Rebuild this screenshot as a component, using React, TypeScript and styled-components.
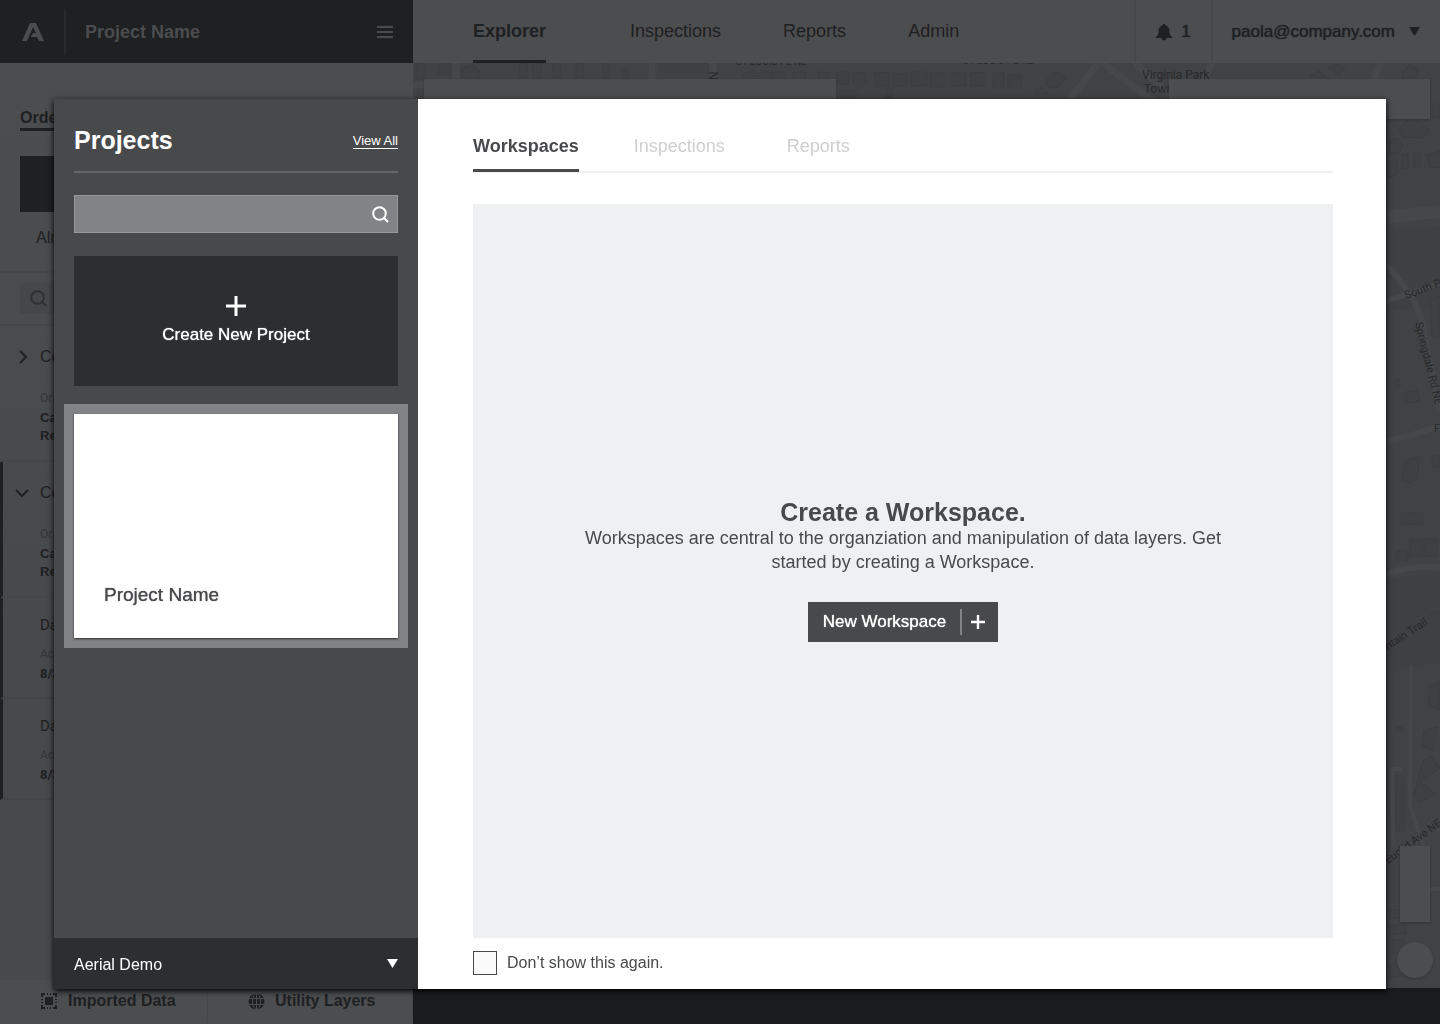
import React from "react";
import styled, { createGlobalStyle } from "styled-components";

const ink = "#1f2022";
const sheet = "#4c4d4f";
const rule = "#464749";
const slate = "#48494b";
const coal = "#2d2e30";
const medium = "0 0 1px currentColor";

const GlobalStyle = createGlobalStyle`
  * { box-sizing: border-box; }
  body {
    margin: 0;
    background: ${sheet};
    font-family: "Liberation Sans", Arial, sans-serif;
    font-size: 16px;
    color: ${ink};
  }
  button, input, select { font: inherit; color: inherit; }
  button { border: 0; padding: 0; background: none; cursor: pointer; }
  h1, h2, p { margin: 0; }
  a { color: inherit; text-decoration: none; }
  svg { display: block; flex: none; }
`;

const Shell = styled.div`
  display: grid;
  grid-template-columns: 413px 1fr;
  height: 100vh;
  overflow: hidden;
`;

const Column = styled.div`
  display: flex;
  flex-direction: column;
  min-width: 0;
  min-height: 0;
`;

/* ---------- left column ---------- */

const Brand = styled.header`
  display: flex;
  align-items: center;
  height: 63px;
  flex: none;
  padding: 0 20px 0 22px;
  background: ${ink};
  color: #4b4c4e;
`;

const BrandName = styled.div`
  flex: 1;
  display: flex;
  align-items: center;
  height: 46px;
  margin-left: 20px;
  padding: 2px 0 0 19px;
  border-left: 2px solid #292a2c;
  font-size: 18px;
  font-weight: 700;
`;

const SideBody = styled.div`
  flex: 1;
  display: flex;
  flex-direction: column;
  min-height: 0;
  background: linear-gradient(${sheet}, ${slate} 60%);
`;

const SideTabs = styled.nav`
  display: flex;
  padding: 42px 20px 0;
`;

const SideTab = styled.a`
  height: 26px;
  line-height: 26px;
  border-bottom: 3px solid ${ink};
  font-weight: 700;
`;

const Tile = styled.button`
  display: flex;
  flex-direction: column;
  align-items: flex-start;
  gap: 16px;
  margin: 25px 20px 0;
  padding-bottom: 23px;
  line-height: 20px;
  &::before {
    content: "";
    width: 66px;
    height: 56px;
    background: ${ink};
  }
`;

const TileText = styled.span`
  padding-left: 16px;
`;

const Filter = styled.label`
  display: block;
  padding: 10px 20px;
  border: solid ${rule};
  border-width: 2px 0;
`;

const FilterBox = styled.span`
  display: flex;
  align-items: center;
  height: 31px;
  padding-left: 10px;
  background: #464749;
  color: #2f3032;
`;

const BareInput = styled.input`
  flex: 1;
  min-width: 0;
  border: 0;
  background: none;
  outline: none;
`;

const Order = styled.section<{ $open?: boolean }>`
  padding: 20px 0 0 ${(p) => (p.$open ? 12 : 15)}px;
  height: 136px;
  border-bottom: 2px solid ${rule};
  border-left: ${(p) => (p.$open ? `3px solid ${ink}` : "0")};
`;

const OrderHead = styled.button`
  display: flex;
  align-items: center;
  gap: 9px;
  line-height: 22px;
`;

const Detail = styled.div<{ $inset?: boolean }>`
  padding: ${(p) => (p.$inset ? "8px 0 0" : "19px 0 0 25px")};
  font-size: 13px;
  font-weight: 700;
  line-height: 18px;
`;

const Caption = styled.div`
  font-family: Roboto, sans-serif;
  font-size: 12px;
  font-weight: 400;
  line-height: 22px;
  color: #343537;
`;

const Entry = styled.section`
  height: 101px;
  padding: 17px 0 0 37px;
  border-left: 3px solid ${ink};
  border-bottom: 2px solid #434446;
  font-family: Roboto, sans-serif;
  font-size: 15px;
  line-height: 20px;
`;

const SideFooter = styled.footer`
  display: grid;
  grid-template-columns: 208px 1fr;
  flex: none;
  height: 44px;
  background: ${sheet};
`;

const FooterLink = styled.button`
  display: flex;
  align-items: center;
  gap: 10px;
  height: 42px;
  padding-left: 40px;
  border-right: 1px solid ${rule};
  color: ${ink};
  font-weight: 700;
`;

/* ---------- top bar and map ---------- */

const TopBar = styled.header`
  display: flex;
  flex: none;
  height: 63px;
  padding-left: 60px;
  background: ${sheet};
`;

const TopNav = styled.nav`
  flex: 1;
  display: flex;
  gap: 62px;
  font-size: 18px;
  line-height: 62px;
`;

const TopLink = styled.a<{ $active?: boolean }>`
  height: 63px;
  border-bottom: 3px solid ${(p) => (p.$active ? ink : "transparent")};
  font-weight: ${(p) => (p.$active ? 700 : 400)};
  margin-right: ${(p) => (p.$active ? 22 : 0)}px;
`;

const Bell = styled.button`
  display: flex;
  align-items: center;
  justify-content: center;
  gap: 8px;
  width: 79px;
  border: solid ${rule};
  border-width: 0 2px;
  font-size: 17px;
  text-shadow: ${medium};
`;

const User = styled.button`
  display: flex;
  align-items: center;
  gap: 14px;
  padding: 0 20px 0 19px;
  font-size: 17px;
  text-shadow: ${medium};
`;

const Map = styled.main`
  position: relative;
  flex: 1;
  min-height: 0;
  overflow: hidden;
  background: #414244;
`;

const MapArt = styled.svg`
  position: absolute;
  top: 0;
  right: 0;
  width: 1027px;
  height: 925px;
`;

const MapTools = styled.div`
  position: absolute;
  inset: 16px 10px 10px 11px;
  display: flex;
  justify-content: space-between;
  align-items: flex-start;
`;

const Panel = styled.div<{ $w: number; $h: number }>`
  width: ${(p) => p.$w}px;
  height: ${(p) => p.$h}px;
  background: ${sheet};
  box-shadow: 0 1px 2px #333436;
`;

const Zoom = styled.div`
  position: absolute;
  right: 7px;
  bottom: 10px;
  display: flex;
  flex-direction: column;
  align-items: center;
  gap: 20px;
`;

const Round = styled.div`
  width: 36px;
  height: 36px;
  border-radius: 50%;
  background: ${sheet};
  box-shadow: 0 1px 2px #333436;
`;

const Strip = styled.div`
  flex: none;
  height: 36px;
  background: #1a1b1d;
`;

/* ---------- dialog ---------- */

const Overlay = styled.div`
  position: fixed;
  inset: 0;
  display: flex;
  padding: 99px 54px 35px;
`;

const Dialog = styled.div`
  flex: 1;
  display: flex;
  min-width: 0;
  background: #fff;
  color: ${slate};
  box-shadow: 0 2px 6px #000;
`;

const Projects = styled.aside`
  display: flex;
  flex-direction: column;
  flex: none;
  width: 364px;
  background: ${slate};
  color: #fff;
`;

const ProjectsBody = styled.div`
  flex: 1;
  display: flex;
  flex-direction: column;
  padding: 0 20px;
`;

const ProjectsHead = styled.div`
  display: flex;
  align-items: center;
  justify-content: space-between;
  height: 74px;
  padding-top: 10px;
  border-bottom: 2px solid #646567;
`;

const Title = styled.h1`
  font-size: 25px;
  line-height: 32px;
`;

const ViewAll = styled.a`
  margin-top: 3px;
  border-bottom: 1px solid #fff;
  font-size: 13px;
  line-height: 14px;
`;

const Search = styled.label`
  display: flex;
  align-items: center;
  height: 38px;
  margin-top: 22px;
  padding-right: 8px;
  border: 1px solid #96979a;
  background: #828386;
`;

const NewProject = styled.button`
  display: flex;
  flex-direction: column;
  align-items: center;
  justify-content: center;
  gap: 8px;
  height: 130px;
  margin-top: 23px;
  background: ${coal};
  font-size: 17px;
  line-height: 22px;
  text-shadow: ${medium};
`;

const Card = styled.button`
  display: flex;
  align-items: flex-end;
  height: 224px;
  margin-top: 28px;
  padding: 0 30px 32px;
  background: #fff;
  box-shadow: 0 1px 2px ${coal}, 0 0 0 10px #828386;
  color: ${slate};
  font-size: 19px;
  line-height: 22px;
  text-shadow: ${medium};
`;

const Account = styled.div`
  position: relative;
  display: flex;
  align-items: center;
  height: 51px;
  background: ${coal};
  svg {
    position: absolute;
    right: 20px;
    pointer-events: none;
  }
`;

const AccountSelect = styled.select`
  appearance: none;
  width: 100%;
  height: 100%;
  padding: 2px 20px 0;
  border: 0;
  background: none;
  outline: none;
`;

const Content = styled.section`
  flex: 1;
  display: flex;
  flex-direction: column;
  min-width: 0;
  padding: 0 53px 0 55px;
`;

const Tabs = styled.nav`
  display: flex;
  gap: 62px;
  height: 74px;
  padding-top: 34px;
  border-bottom: 2px solid #efeff0;
  font-size: 18px;
  line-height: 26px;
`;

const Tab = styled.a<{ $active?: boolean }>`
  height: 39px;
  border-bottom: 3px solid ${(p) => (p.$active ? slate : "transparent")};
  color: ${(p) => (p.$active ? slate : "#cfcfd1")};
  font-weight: ${(p) => (p.$active ? 700 : 400)};
  margin-right: ${(p) => (p.$active ? -7 : 0)}px;
`;

const Empty = styled.div`
  flex: 1;
  display: flex;
  flex-direction: column;
  align-items: center;
  justify-content: center;
  margin-top: 31px;
  padding: 0 100px 2px;
  background: #eff0f2;
  text-align: center;
`;

const EmptyTitle = styled.h2`
  font-size: 25px;
  line-height: 28px;
`;

const EmptyText = styled.p`
  max-width: 660px;
  font-size: 18px;
  line-height: 24px;
`;

const NewWorkspace = styled.button`
  display: flex;
  align-items: center;
  height: 40px;
  margin-top: 28px;
  padding: 0 13px 0 15px;
  background: ${slate};
  color: #fff;
  font-size: 17px;
  text-shadow: ${medium};
  svg {
    width: 25px;
    height: 26px;
    margin-left: 14px;
    padding-left: 9px;
    border-left: 2px solid #828386;
  }
`;

const Again = styled.label`
  display: flex;
  align-items: center;
  gap: 10px;
  height: 51px;
  padding-bottom: 2px;
`;

const Check = styled.input`
  appearance: none;
  width: 24px;
  height: 24px;
  margin: 0;
  border: 1px solid ${slate};
  background: #fafafa;
  &:checked { background: ${slate}; }
`;

/* ---------- drawings ---------- */

const Logo = () => (
  <svg width="22" height="18" viewBox="0 0 22 18" fill="currentColor">
    <path d="M8 0h6l8 18h-5l-2-4H9l2-4h3l-3-6-6 14H0z" />
  </svg>
);

const Bars = () => (
  <svg width="16" height="12" viewBox="0 0 16 12" fill="currentColor">
    <path d="M0 0h16v2H0zM0 5h16v2H0zM0 10h16v2H0z" />
  </svg>
);

const Lens = () => (
  <svg width="17" height="17" viewBox="0 0 17 17" fill="none" stroke="currentColor" strokeWidth="2">
    <circle cx="7.500" cy="7.500" r="6.300" />
    <path d="M11.800 11.800l4.200 4.200" />
  </svg>
);

const Chevron = ({ down }: { down?: boolean }) => (
  <svg width="16" height="16" viewBox="0 0 16 16" fill="none" stroke="currentColor" strokeWidth="2">
    <path d={down ? "M1 5l6 6 6-6" : "M5 2l6 6-6 6"} />
  </svg>
);

const Caret = () => (
  <svg width="11" height="9" viewBox="0 0 11 9" fill="currentColor">
    <path d="M0 0h11L5.500 9z" />
  </svg>
);

const BellIcon = () => (
  <svg width="18" height="18" viewBox="0 0 18 18" fill="currentColor">
    <path d="M9 1c.9 0 1.400.6 1.400 1.300 2.500.8 4 2.700 4 5.300 0 3.700.8 5 2.600 6.200.6.500.3 1.200-.4 1.200h-5.100a2.500 2.500 0 0 1-5 0H1.400c-.7 0-1-.7-.4-1.200 1.800-1.200 2.600-2.500 2.600-6.200 0-2.600 1.500-4.500 4-5.300C7.600 1.600 8.100 1 9 1z" />
  </svg>
);

const Plus = ({ size }: { size: number }) => (
  <svg width={size} height={size} viewBox={`0 0 ${size} ${size}`} stroke="currentColor" strokeWidth="3">
    <path d={`M0 ${size / 2}h${size}M${size / 2} 0v${size}`} />
  </svg>
);

const PlusSmall = () => (
  <svg viewBox="0 0 14 26" stroke="currentColor" strokeWidth="2.400">
    <path d="M0 13h14M7 6v14" />
  </svg>
);

const Imported = () => (
  <svg width="18" height="18" viewBox="0 0 18 18" fill="none" stroke="currentColor" strokeWidth="2">
    <path d="M2 5V2h3M13 2h3v3M16 13v3h-3M5 16H2v-3M7 2h1M10 2h1M7 16h1M10 16h1M2 7v1M2 10v1M16 7v1M16 10v1" />
    <rect x="5" y="5" width="8" height="8" rx="1" fill="currentColor" stroke="none" />
  </svg>
);

const Globe = () => (
  <svg width="17" height="17" viewBox="0 0 17 17" fill="none" stroke={sheet}>
    <circle cx="8.500" cy="8.500" r="8" fill="currentColor" stroke="none" />
    <ellipse cx="8.500" cy="8.500" rx="4" ry="8" />
    <path d="M8.500 0v17M0 5.500h17M0 11.500h17" />
  </svg>
);

const MapDrawing = () => (
  <MapArt viewBox="413 63 1027 925" aria-hidden="true">
    <path d="M1387 232l53-6v83l-53 1zM1386 580l54-8v90l-54 11z" fill="#3f4042" />
    <g fill="#3f4042" stroke="#3b3c3e" strokeWidth="1">
      <path d="M416 63h10v16h-10zM438 63h12v12h-12zM462 68l10-3 8 6-2 8h-16zM519 63h8v15h-8zM533 63h8v15h-8zM553 63h8v15h-8zM576 63h7v15h-7zM603 63h7v15h-7zM622 70h7v9h-7zM660 63h48v9h-48z" />
      <path d="M743 74l10-3 6 3 8-3 6 8h-30zM772 72h14v12h-14zM793 72h13v11h-13zM818 72h10v11h-10zM837 72h12v12h-12zM853 74l12-2 2 9-8 8-6-6zM874 73l14-1 1 14h-13zM893 74h13v12h-13zM911 72h16v14h-16zM930 73h14v14h-14zM951 73h15v13h-15zM970 73l14-1v14h-13zM993 73h11v15h-11zM1008 75h13v13h-13zM840 90h16v7h-16zM886 88h6v9h-6z" />
      <path d="M1045 81l10-9 11 5-7 10-9 1zM1035 91l5-5 9 8h-10zM1310 76l8-5 12 9zM1328 68l8-4 9 3-6 8zM1402 74l7-9 9 5-4 9h-12z" />
      <path d="M1399 130l8-10 14 2 8 8-6 8-20-1zM1390 141l8-3 5 8-5 8-9-1zM1387 161h11v13l-11 4zM1402 154h6v15h-6zM1414 152h6v15h-6zM1427 155l13-4v17l-10-1zM1433 104h7v14h-7zM1430 300l10-4v42l-8-2zM1393 382l5-3 3 6-4 3zM1405 393l12-3 3 11-15 2zM1404 462l15-6-1 22-8 5-8-2zM1432 456h8v11h-8zM1401 513h22v11h-22z" />
      <path d="M1410 540h12v16h-12zM1424 539h13v17h-13zM1396 552l12-2v11h-12zM1430 686l10-5v29l-12-4zM1424 731l13-4-4 24-11-5zM1423 761l8-5 9 12-20 14 15 11-16 10-5-8zM1396 776h8v55h-8zM1396 727h7v4h-7zM1390 910h10v8h-10zM1390 925h16v9h-16zM1392 940h12v14h-12zM1390 965h14v12h-14z" />
    </g>
    <g fill="none" stroke="#464749">
      <path d="M413 85h60M456 63v20M652 63v20M713 63v20M1098 63l-28 36M1102 63l54 40M1135 63l40 36M1212 63l-8 16M1382 63l-8 16" strokeWidth="7" />
      <path d="M1387 218q25-5 53-6" strokeWidth="13" />
      <path d="M1386 265q32 32 38 65t16 83M1386 301l54-18" strokeWidth="6" />
      <path d="M1386 442q26-7 54-16M1386 574q25-9 54-7" strokeWidth="6" />
      <path d="M1411 665l-1 140 14 42M1402 769h-10l1 77M1430 889h10M1430 822l10 10" strokeWidth="4" />
    </g>
    <path d="M1424 620q4-12 16-12" fill="none" stroke="#4a4b4d" strokeDasharray="2 2" />
    <g fill="#28292b" fontFamily="Roboto, sans-serif" fontSize="11">
      <text x="736" y="65" fontSize="10">ST LOUIS PL NE</text>
      <text x="963" y="64" fontSize="10">ST LOUIS PL NE</text>
      <text transform="translate(718 80) rotate(-90)" fontSize="12">N</text>
      <text x="1142" y="79" fontSize="12">Virginia Park</text>
      <text x="1144" y="93" fontSize="12">Town</text>
      <text transform="translate(1406 299) rotate(-20)">South P</text>
      <text transform="translate(1415 323) rotate(76)">Springdale Rd NE</text>
      <text x="1434" y="432">F</text>
      <text transform="translate(1388 650) rotate(-33)">ntain Trail</text>
      <text transform="translate(1388 864) rotate(-36)">Euclid Ave NE</text>
    </g>
  </MapArt>
);

/* ---------- page ---------- */

const orders = [
  { name: "Co", open: false },
  { name: "Co", open: true },
];

const entries = ["8/3", "8/3"];

export default function App() {
  return (
    <>
      <GlobalStyle />
      <Shell>
        <Column>
          <Brand>
            <Logo />
            <BrandName>Project Name</BrandName>
            <button aria-label="Menu"><Bars /></button>
          </Brand>
          <SideBody>
            <SideTabs><SideTab href="#orders">Orders</SideTab></SideTabs>
            <Tile><TileText>Alr</TileText></Tile>
            <Filter>
              <FilterBox>
                <Lens />
                <BareInput aria-label="Search orders" />
              </FilterBox>
            </Filter>
            {orders.map((o, i) => (
              <Order key={i} $open={o.open}>
                <OrderHead><Chevron down={o.open} />{o.name}</OrderHead>
                <Detail>
                  <Caption>Or</Caption>
                  <div>Ca</div>
                  <div>Re</div>
                </Detail>
              </Order>
            ))}
            {entries.map((date, i) => (
              <Entry key={i}>
                Da
                <Detail $inset>
                  <Caption>Ac</Caption>
                  {date}
                </Detail>
              </Entry>
            ))}
          </SideBody>
          <SideFooter>
            <FooterLink><Imported />Imported Data</FooterLink>
            <FooterLink><Globe />Utility Layers</FooterLink>
          </SideFooter>
        </Column>

        <Column>
          <TopBar>
            <TopNav>
              <TopLink href="#explorer" $active>Explorer</TopLink>
              <TopLink href="#inspections">Inspections</TopLink>
              <TopLink href="#reports">Reports</TopLink>
              <TopLink href="#admin">Admin</TopLink>
            </TopNav>
            <Bell aria-label="1 notification"><BellIcon />1</Bell>
            <User>paola@company.com<Caret /></User>
          </TopBar>
          <Map>
            <MapDrawing />
            <MapTools>
              <Panel $w={412} $h={40} />
              <Panel $w={261} $h={40} />
            </MapTools>
            <Zoom>
              <Panel $w={30} $h={76} />
              <Round />
            </Zoom>
          </Map>
          <Strip />
        </Column>
      </Shell>

      <Overlay>
        <Dialog role="dialog" aria-labelledby="projects-title">
          <Projects>
            <ProjectsBody>
              <ProjectsHead>
                <Title id="projects-title">Projects</Title>
                <ViewAll href="#all">View All</ViewAll>
              </ProjectsHead>
              <Search>
                <BareInput aria-label="Search projects" />
                <Lens />
              </Search>
              <NewProject><Plus size={20} />Create New Project</NewProject>
              <Card>Project Name</Card>
            </ProjectsBody>
            <Account>
              <AccountSelect aria-label="Account">
                <option>Aerial Demo</option>
              </AccountSelect>
              <Caret />
            </Account>
          </Projects>

          <Content>
            <Tabs>
              <Tab href="#workspaces" $active>Workspaces</Tab>
              <Tab href="#ws-inspections">Inspections</Tab>
              <Tab href="#ws-reports">Reports</Tab>
            </Tabs>
            <Empty>
              <EmptyTitle>Create a Workspace.</EmptyTitle>
              <EmptyText>
                Workspaces are central to the organziation and manipulation of data layers. Get
                started by creating a Workspace.
              </EmptyText>
              <NewWorkspace>New Workspace<PlusSmall /></NewWorkspace>
            </Empty>
            <Again>
              <Check type="checkbox" />
              Don’t show this again.
            </Again>
          </Content>
        </Dialog>
      </Overlay>
    </>
  );
}
